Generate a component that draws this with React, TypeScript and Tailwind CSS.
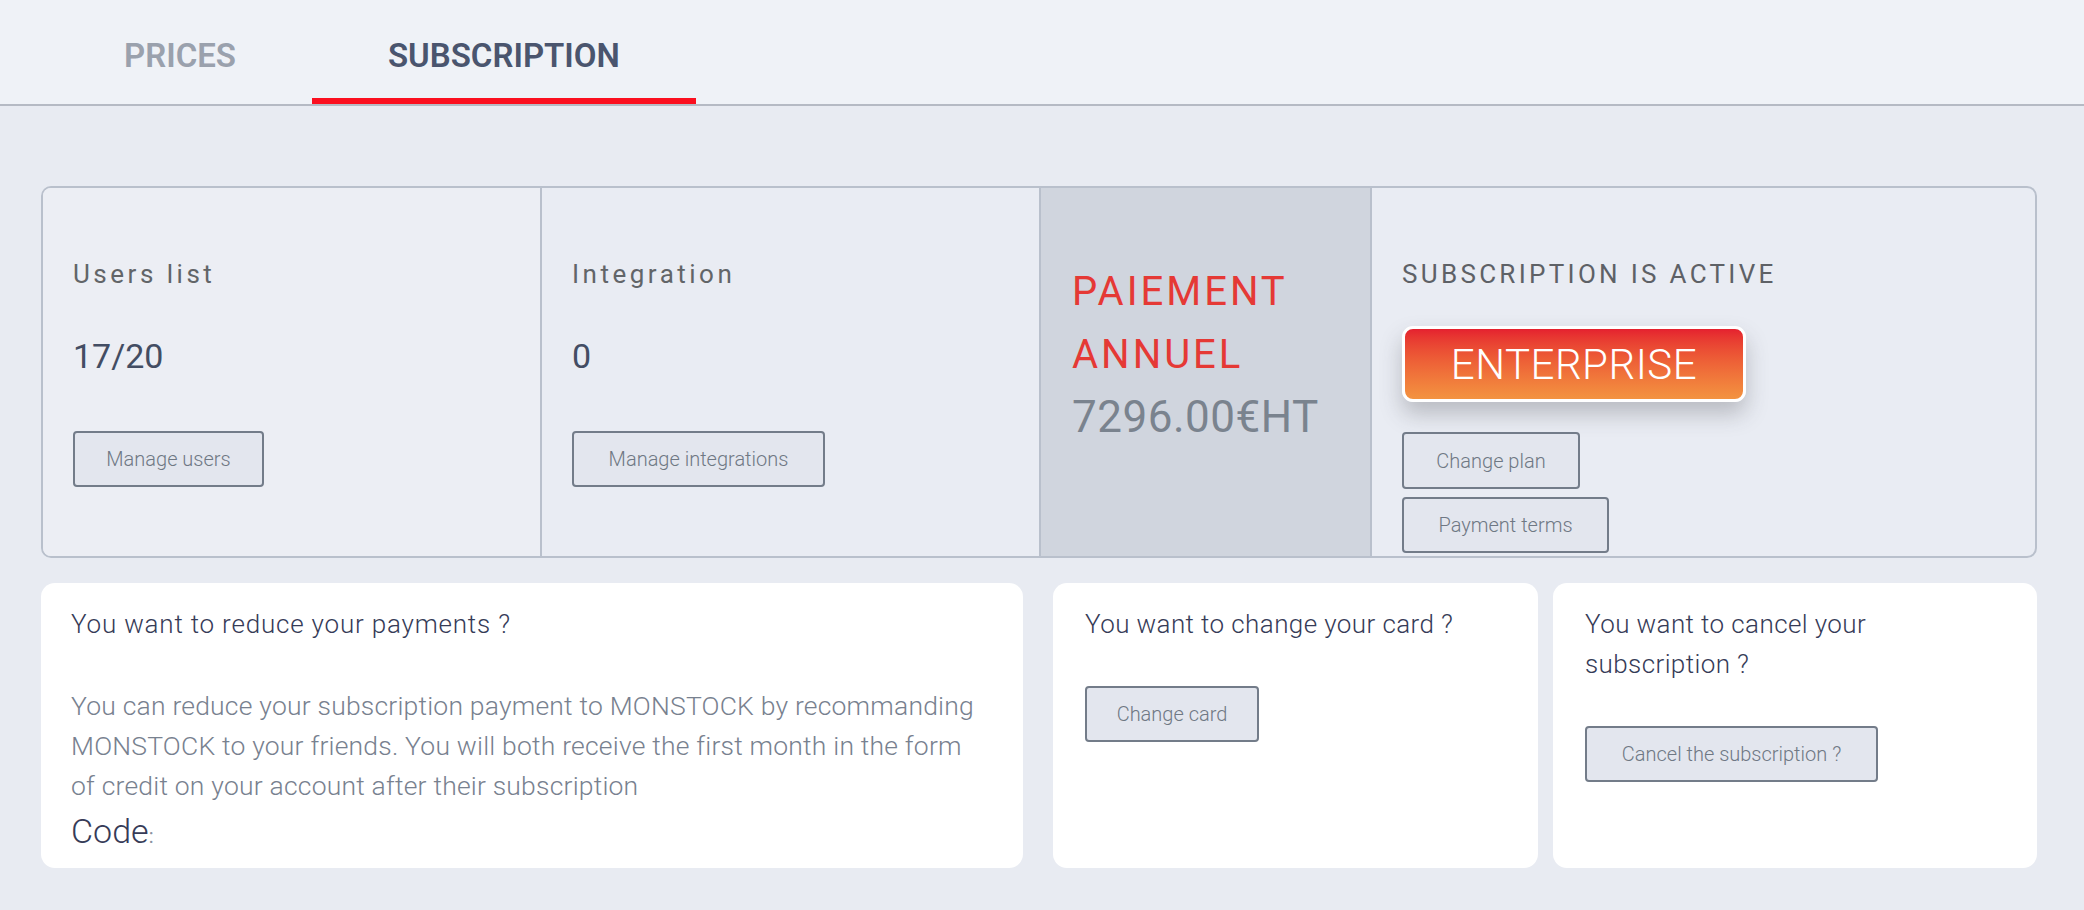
import { ReactNode } from 'react';

const FONT = { fontFamily: 'Roboto, "Open Sans", sans-serif' };

function OutlineButton({ children, className = '' }: { children: ReactNode; className?: string }) {
  return (
    <button
      className={`h-[56px] whitespace-nowrap rounded-[4px] border-2 border-[#737c89] bg-[#e3e6ee] text-[20px] font-light text-[#6f7884] ${className}`}
    >
      {children}
    </button>
  );
}

function StatColumn({ title, value, action, width }: { title: string; value: string; action: string; width: string }) {
  return (
    <div className="flex flex-col pl-[30px] pt-[70px]">
      <div className="text-[26px] leading-[32px] tracking-[3.5px] text-[#626568]">{title}</div>
      <div className="mt-[44px] text-[34px] leading-[44px] text-[#434d63]">{value}</div>
      <div className="mt-[53px]">
        <OutlineButton className={width}>{action}</OutlineButton>
      </div>
    </div>
  );
}

export default function App() {
  return (
    <div className="min-h-[910px] bg-[#e8ebf2]" style={FONT}>
      {/* tabs */}
      <div className="flex h-[106px] border-b-2 border-[#b5bac4] bg-[#eff2f7] pl-[48px]">
        <div className="flex items-center px-[76px] pt-[8px] text-[33px] font-semibold text-[#9aa1ad]">PRICES</div>
        <div className="relative flex items-center px-[76px] pt-[8px] text-[33px] font-semibold text-[#4a556e]">
          SUBSCRIPTION
          <span className="absolute bottom-0 left-0 right-0 h-[6px] bg-[#fb0f1f]" />
        </div>
      </div>

      <div className="pl-[41px] pr-[47px] pt-[80px]">
        {/* plan overview */}
        <div className="flex overflow-hidden rounded-[10px] border-2 border-[#b9c0cc] bg-[#e9ecf3]">
          <div className="w-[497px] bg-[#eceef4]">
            <StatColumn title="Users list" value="17/20" action="Manage users" width="w-[191px]" />
          </div>
          <div className="w-[499px] border-l-2 border-[#b9c0cc]">
            <StatColumn title="Integration" value="0" action="Manage integrations" width="w-[253px]" />
          </div>
          <div className="w-[331px] border-l-2 border-[#b9c0cc] bg-[#d0d5de] pl-[31px] pt-[72px]">
            <div className="text-[40px] leading-[63px] tracking-[3px] text-[#e53935]">
              PAIEMENT
              <br />
              ANNUEL
            </div>
            <div className="text-[44px] leading-[63px] tracking-[0.5px] text-[#7a838e]">7296.00€HT</div>
          </div>
          <div className="flex flex-1 flex-col items-start border-l-2 border-[#b9c0cc] pb-[3px] pl-[30px] pt-[70px]">
            <div className="text-[26px] leading-[32px] tracking-[3.3px] text-[#5e6166]">SUBSCRIPTION IS ACTIVE</div>
            <div className="mt-[36px] flex h-[76px] w-[344px] items-center justify-center rounded-[11px] border-[3px] border-white bg-gradient-to-b from-[#e5202f] to-[#f39340] text-[42px] font-light tracking-[0.5px] text-white shadow-[0_12px_22px_rgba(60,60,70,0.28)]">
              ENTERPRISE
            </div>
            <OutlineButton className="mt-[30px] h-[57px] w-[178px]">Change plan</OutlineButton>
            <OutlineButton className="mt-[8px] w-[207px]">Payment terms</OutlineButton>
          </div>
        </div>

        {/* actions */}
        <div className="mt-[25px] flex">
          <div className="h-[285px] w-[982px] rounded-[14px] bg-white pl-[30px] pt-[21px]">
            <div className="text-[26px] font-light leading-[40px] tracking-[0.8px] text-[#363b57]">You want to reduce your payments ?</div>
            <p className="mt-[42px] text-[26.5px] font-light leading-[40px] tracking-[0.2px] text-[#78818f]">
              You can reduce your subscription payment to MONSTOCK by recommanding
              <br />
              MONSTOCK to your friends. You will both receive the first month in the form
              <br />
              of credit on your account after their subscription
            </p>
            <div className="mt-[5px] leading-[40px] text-[#363b57]">
              <span className="text-[34px] font-light">Code</span>
              <span className="text-[20px] text-[#8a92a0]">:</span>
            </div>
          </div>
          <div className="ml-[30px] h-[285px] w-[485px] rounded-[14px] bg-white pl-[32px] pt-[21px]">
            <div className="text-[26px] font-light leading-[40px] tracking-[0.4px] text-[#363b57]">You want to change your card ?</div>
            <OutlineButton className="mt-[42px] w-[174px]">Change card</OutlineButton>
          </div>
          <div className="ml-[15px] h-[285px] w-[484px] rounded-[14px] bg-white pl-[32px] pt-[21px]">
            <div className="max-w-[320px] text-[26px] font-light leading-[40px] tracking-[0.4px] text-[#363b57]">
              You want to cancel your subscription ?
            </div>
            <OutlineButton className="mt-[42px] w-[293px]">Cancel the subscription ?</OutlineButton>
          </div>
        </div>
      </div>
    </div>
  );
}
